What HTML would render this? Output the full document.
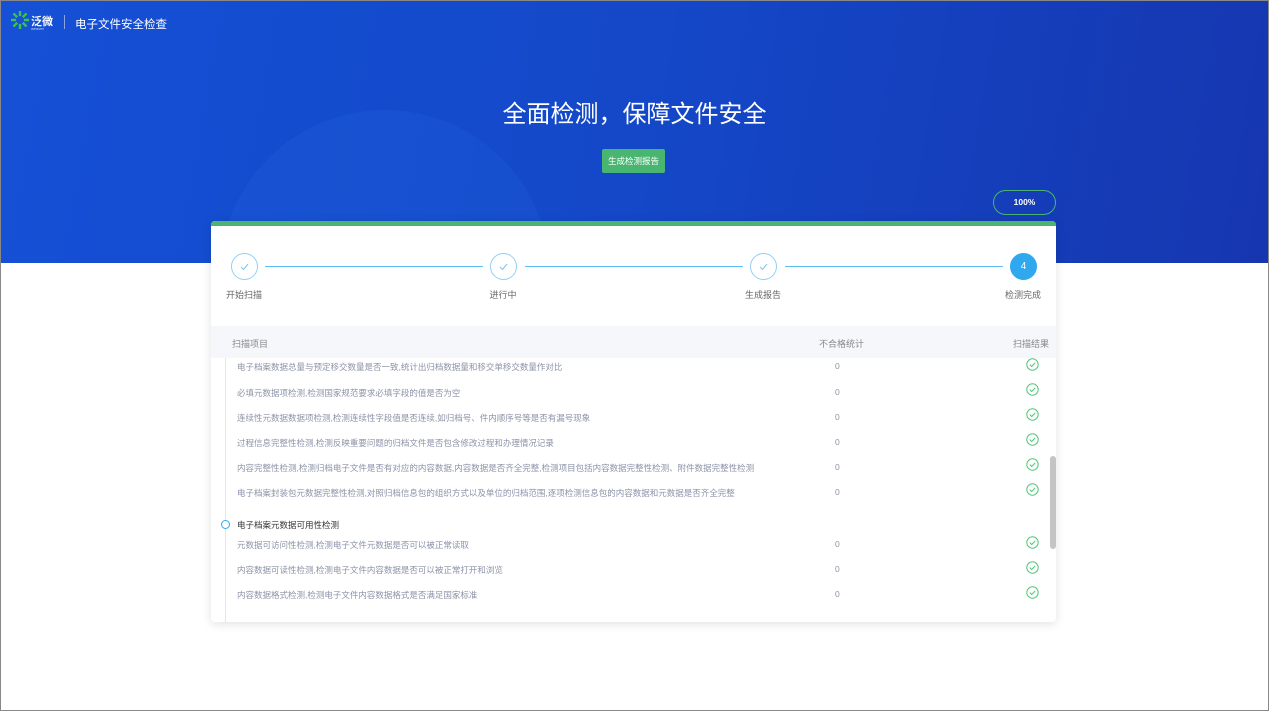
<!DOCTYPE html>
<html><head><meta charset="utf-8"><style>
*{margin:0;padding:0;box-sizing:border-box}
body{width:1269px;height:711px;overflow:hidden;background:#fff;font-family:"Liberation Sans","Noto Sans CJK SC",sans-serif;position:relative}
.frame{position:absolute;left:0;top:0;width:1269px;height:711px;border:1px solid #888;z-index:10;pointer-events:none}
.banner{position:absolute;left:0;top:0;width:1269px;height:263px;background:linear-gradient(100deg,#1550d6 0%,#1448c8 50%,#1636b0 100%);overflow:hidden}
.blob{position:absolute;left:220px;top:110px;width:330px;height:330px;border-radius:50%;background:rgba(40,110,230,0.18)}
.abs{position:absolute}
.card{position:absolute;left:211px;top:221px;width:845px;height:401px;background:#fff;border-radius:4px;box-shadow:0 2px 10px rgba(0,0,0,.12);overflow:hidden}
.green{position:absolute;left:0;top:0;width:845px;height:5px;background:#4bb56f}
.circ{position:absolute;width:27px;height:27px;border-radius:50%;border:1.5px solid #8fd0f7;top:32px}
.circ svg{position:absolute;left:6.5px;top:6.5px}
.line{position:absolute;top:45px;height:1px;background:#5bbcf3}
.lbl{position:absolute;top:67px;font-size:9px;color:#666;transform:translateX(-50%);white-space:nowrap}
.th{position:absolute;left:0;top:105px;width:845px;height:32px;background:#f5f7fa;font-size:9px;color:#888}
.row{position:absolute;font-size:8.5px;color:#8c93a8;white-space:nowrap}
.z{position:absolute;left:624px;font-size:8.5px;color:#8c93a8}
.ck{position:absolute;left:815px}
</style></head><body>
<div class="frame"></div>
<div class="banner"><div class="blob"></div>
<svg class="abs" style="left:10px;top:10px" width="20" height="20" viewBox="0 0 20 20"><g stroke="#3cc24a" stroke-width="2.5"><line x1="10" y1="1" x2="10" y2="19"/><line x1="1" y1="10" x2="19" y2="10"/><line x1="3.5" y1="3.5" x2="16.5" y2="16.5"/><line x1="16.5" y1="3.5" x2="3.5" y2="16.5"/></g><circle cx="10" cy="10" r="4" fill="#1550d6"/></svg>
<div class="abs" style="left:31px;top:13px;color:#fff;font-size:11px;font-weight:bold">泛微</div>
<div class="abs" style="left:31px;top:26px;color:#cfd8f5;font-size:4px">weaver</div>
<div class="abs" style="left:64px;top:15px;width:1px;height:14px;background:#8aa3e6"></div>
<div class="abs" style="left:75px;top:16px;color:#fff;font-size:11.5px">电子文件安全检查</div>
<div class="abs" style="left:0;width:1269px;top:94px;text-align:center;color:#fff;font-size:24px">全面检测，保障文件安全</div>
<div class="abs" style="left:602px;top:149px;width:63px;height:24px;background:#48b570;border-radius:2px;color:#fff;font-size:8.5px;line-height:24px;text-align:center">生成检测报告</div>
<div class="abs" style="left:993px;top:190px;width:63px;height:25px;border:1.5px solid #4bb56f;border-radius:13px;color:#fff;font-size:8.5px;font-weight:bold;line-height:22px;text-align:center">100%</div>
</div>
<div class="card"><div class="green"></div>
<div class="circ" style="left:20px"><svg width="11" height="11" viewBox="0 0 11 11"><path d="M2 6l2.5 2.5L9 3" stroke="#7cc4ef" stroke-width="1" fill="none"/></svg></div>
<div class="circ" style="left:279px"><svg width="11" height="11" viewBox="0 0 11 11"><path d="M2 6l2.5 2.5L9 3" stroke="#7cc4ef" stroke-width="1" fill="none"/></svg></div>
<div class="circ" style="left:539px"><svg width="11" height="11" viewBox="0 0 11 11"><path d="M2 6l2.5 2.5L9 3" stroke="#7cc4ef" stroke-width="1" fill="none"/></svg></div>
<div class="circ" style="left:799px;background:#2fa8ef;border-color:#2fa8ef;color:#fff;font-size:10px;display:flex;align-items:center;justify-content:center">4</div>
<div class="line" style="left:54px;width:218px"></div>
<div class="line" style="left:314px;width:218px"></div>
<div class="line" style="left:574px;width:218px"></div>
<div class="lbl" style="left:33px">开始扫描</div>
<div class="lbl" style="left:292px">进行中</div>
<div class="lbl" style="left:552px">生成报告</div>
<div class="lbl" style="left:812px">检测完成</div>
<div class="th"><span class="abs" style="left:21px;top:11px">扫描项目</span><span class="abs" style="left:608px;top:11px">不合格统计</span><span class="abs" style="left:802px;top:11px">扫描结果</span></div>
<div class="abs" style="left:14px;top:137px;width:1px;height:264px;background:#e3e6ec"></div>
<div class="abs" style="left:10px;top:299px;width:9px;height:9px;border:1.5px solid #2fa8ef;border-radius:50%;background:#fff"></div>
<div class="abs" style="left:26px;top:298px;font-size:8.5px;color:#333">电子档案元数据可用性检测</div>
<div class="row" style="left:26px;top:140px">电子档案数据总量与预定移交数量是否一致,统计出归档数据量和移交单移交数量作对比</div><div class="z" style="top:140px">0</div>
<div class="row" style="left:26px;top:166px">必填元数据项检测,检测国家规范要求必填字段的值是否为空</div><div class="z" style="top:166px">0</div>
<div class="row" style="left:26px;top:191px">连续性元数据数据项检测,检测连续性字段值是否连续,如归档号、件内顺序号等是否有漏号现象</div><div class="z" style="top:191px">0</div>
<div class="row" style="left:26px;top:216px">过程信息完整性检测,检测反映重要问题的归档文件是否包含修改过程和办理情况记录</div><div class="z" style="top:216px">0</div>
<div class="row" style="left:26px;top:241px">内容完整性检测,检测归档电子文件是否有对应的内容数据,内容数据是否齐全完整,检测项目包括内容数据完整性检测、附件数据完整性检测</div><div class="z" style="top:241px">0</div>
<div class="row" style="left:26px;top:266px">电子档案封装包元数据完整性检测,对照归档信息包的组织方式以及单位的归档范围,逐项检测信息包的内容数据和元数据是否齐全完整</div><div class="z" style="top:266px">0</div>
<div class="row" style="left:26px;top:318px">元数据可访问性检测,检测电子文件元数据是否可以被正常读取</div><div class="z" style="top:318px">0</div>
<div class="row" style="left:26px;top:343px">内容数据可读性检测,检测电子文件内容数据是否可以被正常打开和浏览</div><div class="z" style="top:343px">0</div>
<div class="row" style="left:26px;top:368px">内容数据格式检测,检测电子文件内容数据格式是否满足国家标准</div><div class="z" style="top:368px">0</div>
<svg class="ck" style="top:137px" width="13" height="13" viewBox="0 0 13 13"><circle cx="6.5" cy="6.5" r="5.7" fill="none" stroke="#52c77a"/><path d="M3.8 6.6l1.9 1.9 3.5-3.6" fill="none" stroke="#52c77a"/></svg>
<svg class="ck" style="top:162px" width="13" height="13" viewBox="0 0 13 13"><circle cx="6.5" cy="6.5" r="5.7" fill="none" stroke="#52c77a"/><path d="M3.8 6.6l1.9 1.9 3.5-3.6" fill="none" stroke="#52c77a"/></svg>
<svg class="ck" style="top:187px" width="13" height="13" viewBox="0 0 13 13"><circle cx="6.5" cy="6.5" r="5.7" fill="none" stroke="#52c77a"/><path d="M3.8 6.6l1.9 1.9 3.5-3.6" fill="none" stroke="#52c77a"/></svg>
<svg class="ck" style="top:212px" width="13" height="13" viewBox="0 0 13 13"><circle cx="6.5" cy="6.5" r="5.7" fill="none" stroke="#52c77a"/><path d="M3.8 6.6l1.9 1.9 3.5-3.6" fill="none" stroke="#52c77a"/></svg>
<svg class="ck" style="top:237px" width="13" height="13" viewBox="0 0 13 13"><circle cx="6.5" cy="6.5" r="5.7" fill="none" stroke="#52c77a"/><path d="M3.8 6.6l1.9 1.9 3.5-3.6" fill="none" stroke="#52c77a"/></svg>
<svg class="ck" style="top:262px" width="13" height="13" viewBox="0 0 13 13"><circle cx="6.5" cy="6.5" r="5.7" fill="none" stroke="#52c77a"/><path d="M3.8 6.6l1.9 1.9 3.5-3.6" fill="none" stroke="#52c77a"/></svg>
<svg class="ck" style="top:315px" width="13" height="13" viewBox="0 0 13 13"><circle cx="6.5" cy="6.5" r="5.7" fill="none" stroke="#52c77a"/><path d="M3.8 6.6l1.9 1.9 3.5-3.6" fill="none" stroke="#52c77a"/></svg>
<svg class="ck" style="top:340px" width="13" height="13" viewBox="0 0 13 13"><circle cx="6.5" cy="6.5" r="5.7" fill="none" stroke="#52c77a"/><path d="M3.8 6.6l1.9 1.9 3.5-3.6" fill="none" stroke="#52c77a"/></svg>
<svg class="ck" style="top:365px" width="13" height="13" viewBox="0 0 13 13"><circle cx="6.5" cy="6.5" r="5.7" fill="none" stroke="#52c77a"/><path d="M3.8 6.6l1.9 1.9 3.5-3.6" fill="none" stroke="#52c77a"/></svg>
<div class="abs" style="left:839px;top:235px;width:6px;height:93px;background:#c4c4c4;border-radius:3px"></div>
</div>
</body></html>
